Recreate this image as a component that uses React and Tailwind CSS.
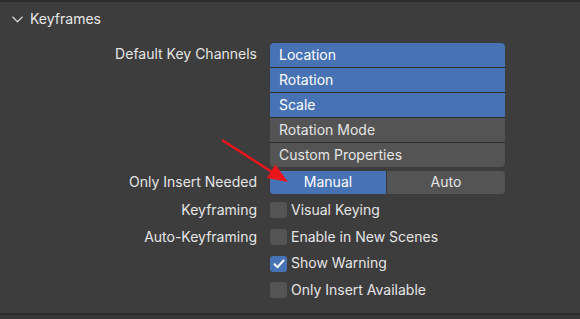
export default function App() {
  const font = { fontFamily: "Inter, 'DejaVu Sans', sans-serif" };
  const rows = [
    ["Location", true],
    ["Rotation", true],
    ["Scale", true],
    ["Rotation Mode", false],
    ["Custom Properties", false],
  ];
  const checks = [
    ["Keyframing", "Visual Keying", false],
    ["Auto-Keyframing", "Enable in New Scenes", false],
    ["", "Show Warning", true],
    ["", "Only Insert Available", false],
  ];
  return (
    <div className="relative w-[580px] h-[319px] bg-[#3d3d3d] overflow-hidden text-[14px] text-[#e5e5e5]" style={font}>
      <div className="h-[2px] bg-[#2b2b2b]" />
      <div className="flex items-center h-[34px] pb-[2px] pl-[12px] gap-[7px]">
        <svg width="11" height="7" viewBox="0 0 11 7" className="mt-[2px]">
          <polyline points="0.5,0.8 5.5,5.8 10.5,0.8" fill="none" stroke="#d0d0d0" strokeWidth="1.3" />
        </svg>
        <span className="text-[#e8e8e8]">Keyframes</span>
      </div>
      <div className="mt-[7px] grid grid-cols-[257px_235px] gap-x-[13px]">
        <div className="h-[23px] pb-[2px] flex items-center justify-end">Default Key Channels</div>
        <div className="flex flex-col rounded-[4px] overflow-hidden bg-[#2d2d2d] gap-[1px]">
          {rows.map(([t, on], i) => (
            <div key={t} className={`h-[24px] pb-[2px] flex items-center pl-[9px] ${on ? "bg-[#4772b3] text-white" : "bg-[#545454]"}`}>
              {t}
            </div>
          ))}
        </div>
        <div className="mt-[4px] h-[23px] pb-[2px] flex items-center justify-end">Only Insert Needed</div>
        <div className="mt-[4px] h-[23px] flex rounded-[4px] overflow-hidden">
          <div className="w-[116px] pb-[2px] bg-[#4772b3] text-white flex items-center justify-center">Manual</div>
          <div className="flex-1 pb-[2px] bg-[#545454] flex items-center justify-center border-l border-[#3a3a3a]">Auto</div>
        </div>
        <div className="col-span-2 h-[3px]" />
        {checks.map(([l, t, on]) => (
          <>
            <div key={l + t + "l"} className="h-[26.7px] pb-[2px] flex items-center justify-end">{l}</div>
            <div key={t} className="h-[26.7px] flex items-center gap-[4px]">
              <div className={`w-[17px] h-[16px] rounded-[3px] flex items-center justify-center ${on ? "bg-[#4772b3]" : "bg-[#545454]"}`}>
                {on && (
                  <svg width="12" height="10" viewBox="0 0 12 10">
                    <polyline points="1.5,5.2 4.6,8.2 10.5,1.5" fill="none" stroke="white" strokeWidth="2" strokeLinecap="round" strokeLinejoin="round" />
                  </svg>
                )}
              </div>
              <span className="-mt-[2px]">{t}</span>
            </div>
          </>
        ))}
      </div>
      <div className="absolute left-0 right-0 top-[313px] h-[2px] bg-[#2b2b2b]" />
      <div className="absolute left-0 right-0 top-[315px] bottom-0 bg-[#383838]" />
      <svg className="absolute left-0 top-0 pointer-events-none" width="580" height="319">
        <line x1="222" y1="140" x2="272" y2="172" stroke="#e8161b" strokeWidth="2.5" />
        <polygon points="288,182 266.8,178 275.4,164.6" fill="#e8161b" />
      </svg>
    </div>
  );
}
